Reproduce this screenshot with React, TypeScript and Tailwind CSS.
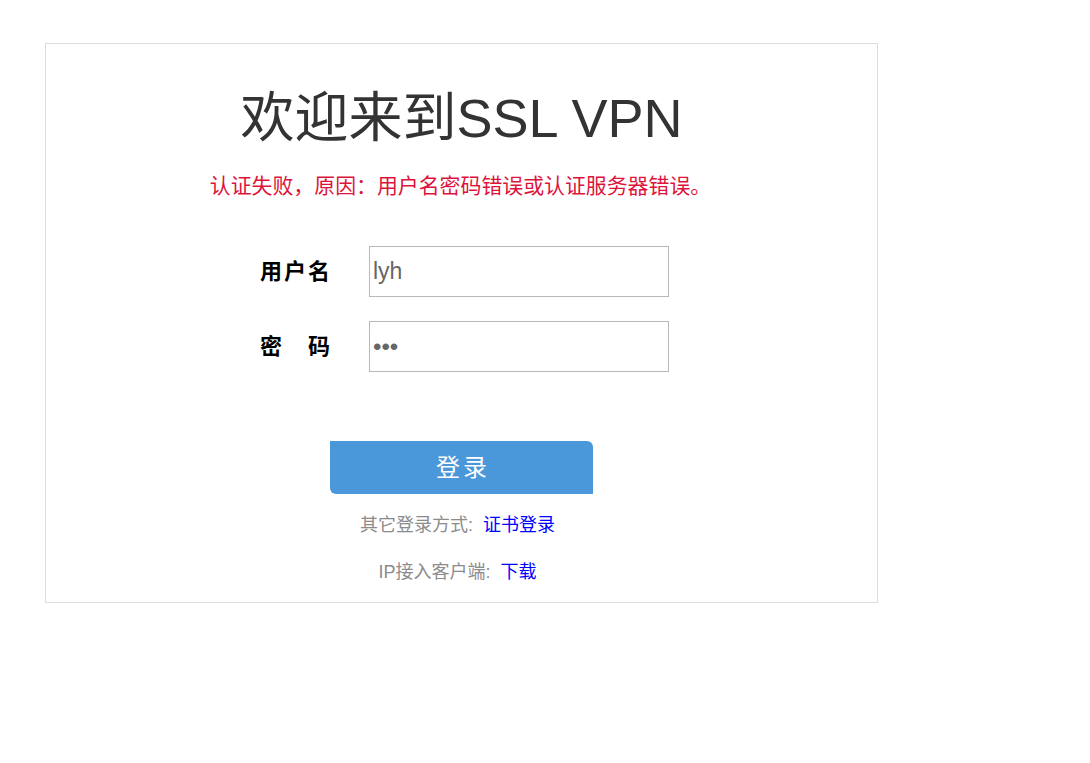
import { useState } from "react";

const FONT = "font-['Liberation_Sans','Noto_Sans_CJK_SC',sans-serif]";

export default function App() {
  const [user, setUser] = useState("lyh");
  const [pwd, setPwd] = useState("abc");

  return (
    <div className={`min-h-screen bg-white ${FONT}`}>
      <div className="pl-[45px] pt-[43px]">
        <div className="w-[833px] h-[560px] border border-[#dddddd] flex flex-col items-center">
          <h1 className="mt-[39px] text-[54px] leading-[70px] text-[#333333]">欢迎来到SSL VPN</h1>
          <p className="mt-[18px] pr-[2px] text-[20.9px] leading-[30px] text-[#dc143c]">
            认证失败，原因：用户名密码错误或认证服务器错误。
          </p>

          <form className="mt-[45px] flex flex-col gap-[24px] pl-[6px]" onSubmit={(e) => e.preventDefault()}>
            <div className="flex items-center">
              <label className="w-[109px] text-[22px] font-bold tracking-[2px] text-black">用户名</label>
              <input
                value={user}
                onChange={(e) => setUser(e.target.value)}
                className="w-[300px] h-[51px] border border-[#b8b8b8] px-[3px] text-[23px] text-[#666666] outline-none"
              />
            </div>
            <div className="flex items-center">
              <label className="w-[109px] text-[22px] font-bold tracking-[2px] text-black">密　码</label>
              <input
                type="password"
                value={pwd}
                onChange={(e) => setPwd(e.target.value)}
                className="w-[300px] h-[51px] border border-[#b8b8b8] px-[3px] text-[24px] text-[#666666] outline-none"
              />
            </div>
          </form>

          <button
            type="button"
            className="mt-[69px] w-[263px] h-[53px] bg-[#4a98da] text-white text-[24px] tracking-[3px] pl-[3px] rounded-tr-[6px] rounded-bl-[6px]"
          >
            登录
          </button>

          <p className="mt-[17px] pr-[8px] text-[18px] leading-[28px] text-[#8c8c8c]">
            其它登录方式:&nbsp;&nbsp;
            <a href="#" className="text-[#0000ff]">证书登录</a>
          </p>
          <p className="mt-[19px] pr-[8px] text-[18px] leading-[28px] text-[#8c8c8c]">
            IP接入客户端:&nbsp;&nbsp;
            <a href="#" className="text-[#0000ff]">下载</a>
          </p>
        </div>
      </div>
    </div>
  );
}
